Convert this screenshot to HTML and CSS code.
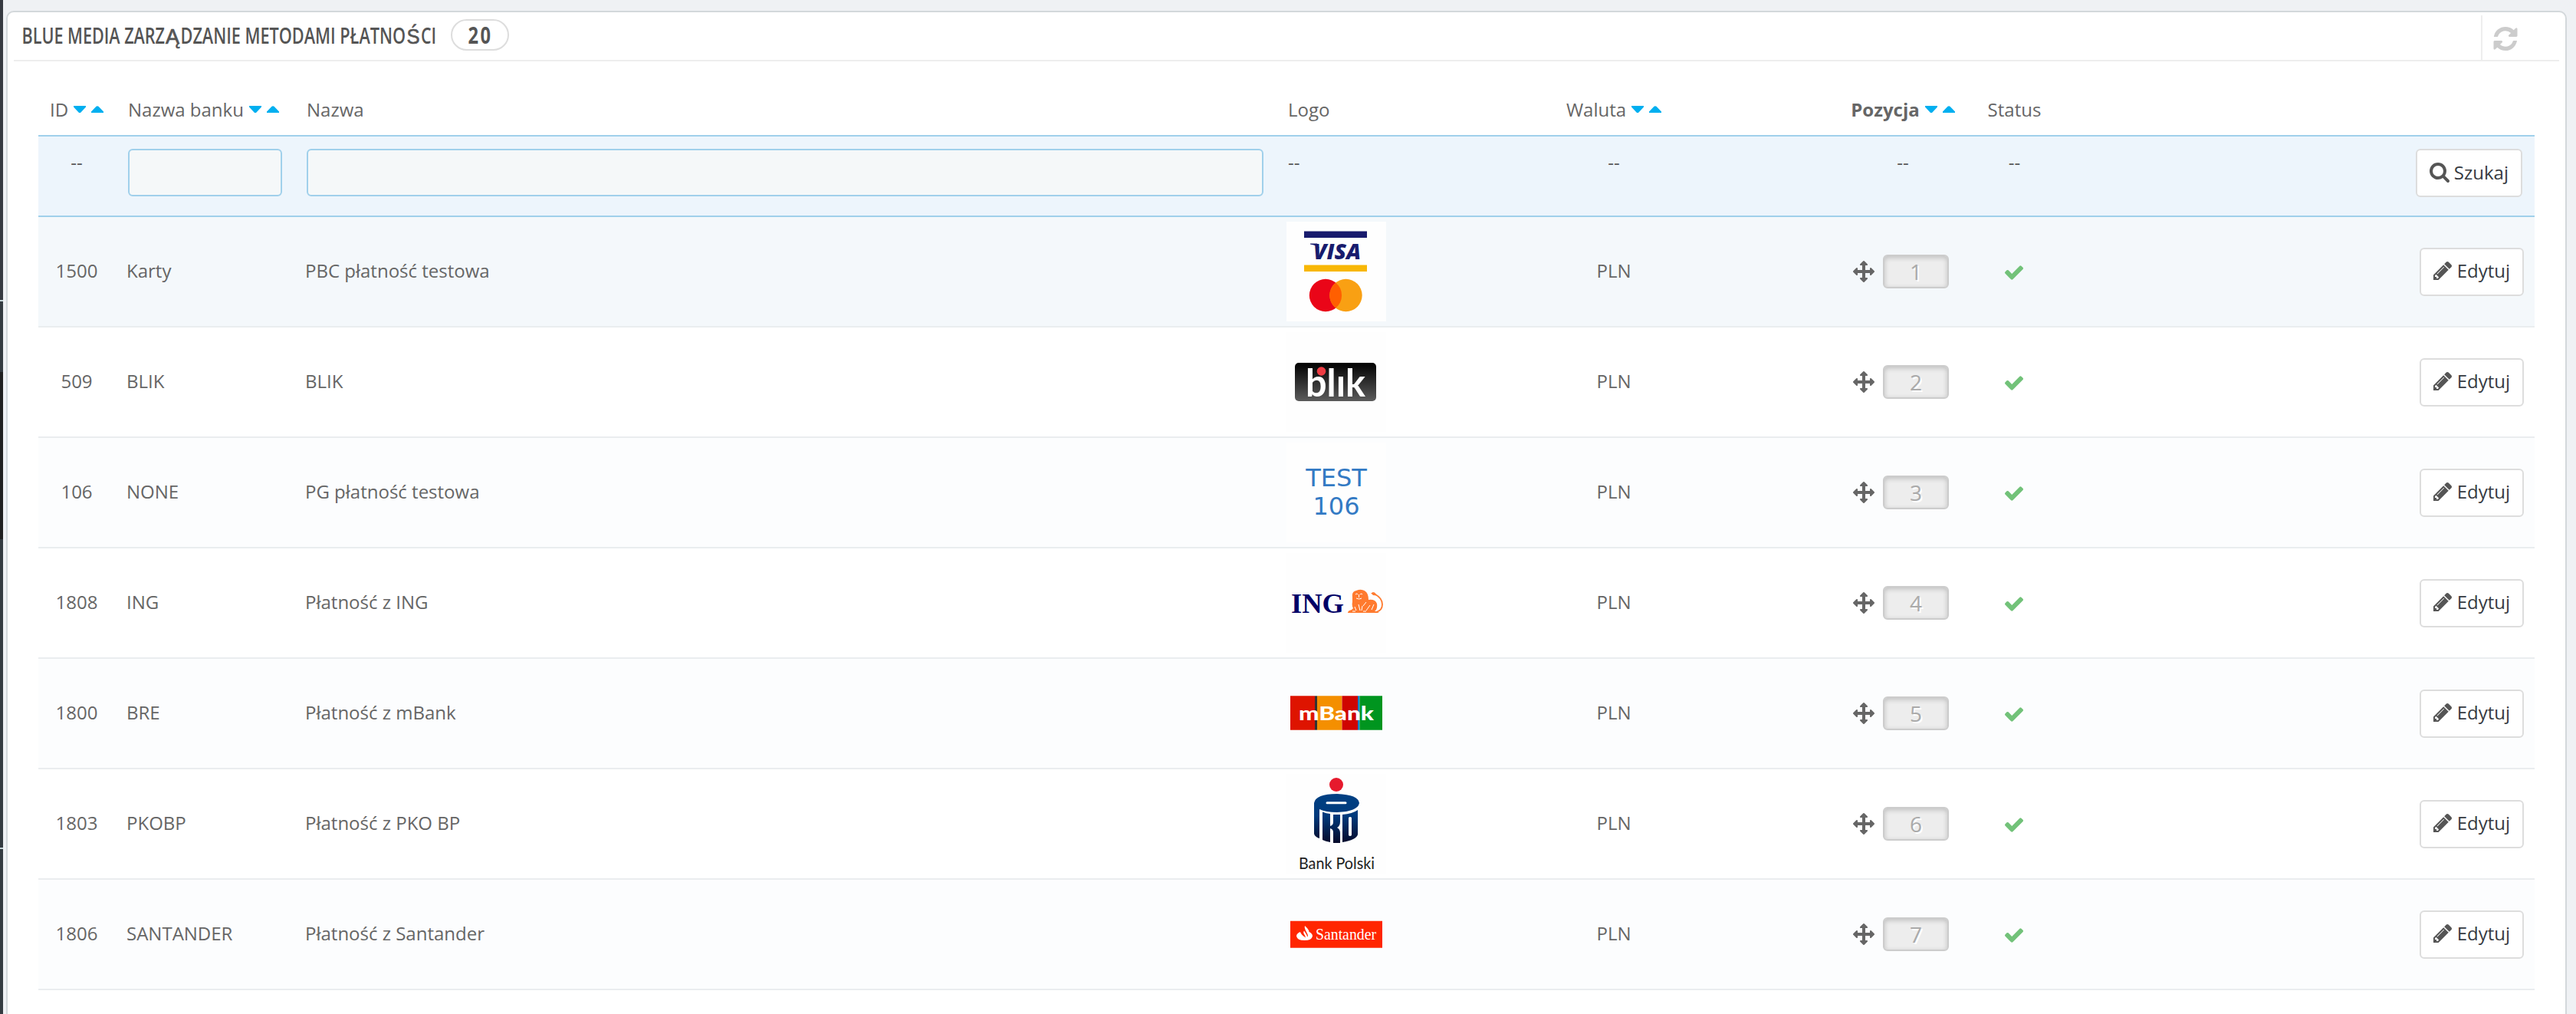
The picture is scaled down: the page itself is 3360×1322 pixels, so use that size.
FILE: index.html
```html
<!DOCTYPE html>
<html lang="pl">
<head>
<meta charset="utf-8">
<title>Blue Media – zarządzanie metodami płatności</title>
<link rel="stylesheet" href="styles.css">
</head>
<body>
<svg class="defs" aria-hidden="true">
  <symbol id="i-refresh" viewBox="128 128 1536 1536"><path d="M1639 1056q0 5-1 7-64 268-268 434.500t-478 166.500q-146 0-282.500-55t-243.500-157l-129 129q-19 19-45 19t-45-19-19-45v-448q0-26 19-45t45-19h448q26 0 45 19t19 45-19 45l-137 137q71 66 161 102t187 36q134 0 250-65t186-179q11-17 53-117 8-23 30-23h192q13 0 22.500 9.500t9.500 22.500zm25-800v448q0 26-19 45t-45 19h-448q-26 0-45-19t-19-45 19-45l138-138q-148-137-349-137-134 0-250 65t-186 179q-11 17-53 117-8 23-30 23h-199q-13 0-22.500-9.500t-9.500-22.500v-7q65-268 270-434.500t480-166.500q146 0 284 55.500t245 156.500l130-129q19-19 45-19t45 19 19 45z"/></symbol>
  <symbol id="i-search" viewBox="64 128 1664 1664"><path d="M1216 832q0-185-131.500-316.500t-316.500-131.500-316.500 131.500-131.500 316.500 131.500 316.500 316.500 131.500 316.500-131.500 131.500-316.500zm512 832q0 52-38 90t-90 38q-54 0-90-38l-343-342q-179 124-399 124-143 0-273.500-55.500t-225-150-150-225-55.500-273.500 55.500-273.500 150-225 225-150 273.500-55.500 273.500 55.500 225 150 150 225 55.500 273.500q0 220-124 399l343 343q37 37 37 90z"/></symbol>
  <symbol id="i-pencil" viewBox="128 149 1515 1515"><path d="M491 1536l91-91-235-235-91 91v107h128v128h107zm523-928q0-22-22-22-10 0-17 7l-542 542q-7 7-7 17 0 22 22 22 10 0 17-7l542-542q7-7 7-17zm-54-192l416 416-832 832h-416v-416zm683 96q0 53-37 90l-166 166-416-416 166-165q36-38 90-38 53 0 91 38l235 234q37 39 37 91z"/></symbol>
  <symbol id="i-check" viewBox="121 334 1550 1188"><path d="M1671 566q0 40-28 68l-724 724-136 136q-28 28-68 28t-68-28l-136-136-362-362q-28-28-28-68t28-68l136-136q28-28 68-28t68 28l294 295 656-657q28-28 68-28t68 28l136 136q28 28 28 68z"/></symbol>
  <symbol id="i-move" viewBox="0 0 1792 1792"><path d="M1792 896q0 26-19 45l-256 256q-19 19-45 19t-45-19-19-45v-128h-384v384h128q26 0 45 19t19 45-19 45l-256 256q-19 19-45 19t-45-19l-256-256q-19-19-19-45t19-45 45-19h128v-384h-384v128q0 26-19 45t-45 19-45-19l-256-256q-19-19-19-45t19-45l256-256q19-19 45-19t45 19 19 45v128h384v-384h-128q-26 0-45-19t-19-45 19-45l256-256q19-19 45-19t45 19l256 256q19 19 19 45t-19 45-45 19h-128v384h384v-128q0-26 19-45t45-19 45 19l256 256q19 19 19 45z"/></symbol>
  <symbol id="i-sort" viewBox="0 0 39 9"><path d="M0 0h16v1.500L9.500 8.500q-1.500 1-3 0L0 1.500zM23 9h16V7.500L32.500.8q-1.500-1-3 0L23 7.500z"/></symbol>
</svg>

<div class="page">
  <nav class="sidebar">
    <span class="side-block side-first"></span>
    <span class="side-block side-current"></span>
    <span class="side-block side-next"></span>
    <span class="side-block side-last"></span>
  </nav>
  <main class="panel">
    <header class="panel-heading">
      <svg class="panel-title" viewBox="0 0 550 54" width="550" height="54"><text y="37"><tspan x="1.500" textLength="186.500" lengthAdjust="spacingAndGlyphs">BLUE MEDIA ZARZ</tspan><tspan class="wide" x="189" textLength="18" lengthAdjust="spacingAndGlyphs">Ą</tspan><tspan x="208.500" textLength="293.500" lengthAdjust="spacingAndGlyphs">DZANIE METODAMI PŁATNO</tspan><tspan class="wide" x="503.500" textLength="17" lengthAdjust="spacingAndGlyphs">Ś</tspan><tspan x="522" textLength="20" lengthAdjust="spacingAndGlyphs">CI</tspan></text></svg>
      <span class="badge"><svg width="34" height="46" viewBox="0 0 34 46"><text class="count" y="37"><tspan x="0.500" textLength="13.500" lengthAdjust="spacingAndGlyphs">2</tspan><tspan x="16.500" textLength="13.500" lengthAdjust="spacingAndGlyphs">0</tspan></text></svg></span>
      <a class="refresh"><svg><use href="#i-refresh"/></svg></a>
    </header>

    <section class="table">
      <div class="row head">
        <div class="c-id">ID <svg class="sort"><use href="#i-sort"/></svg></div>
        <div class="c-bank">Nazwa banku <svg class="sort"><use href="#i-sort"/></svg></div>
        <div class="c-name">Nazwa</div>
        <div class="c-logo">Logo</div>
        <div class="c-cur">Waluta <svg class="sort"><use href="#i-sort"/></svg></div>
        <div class="c-pos"><b>Pozycja</b> <svg class="sort"><use href="#i-sort"/></svg></div>
        <div class="c-status">Status</div>
        <div class="c-act"></div>
      </div>
      <div class="row filter">
        <div class="c-id">--</div>
        <div class="c-bank"><input type="text" class="field"></div>
        <div class="c-name"><input type="text" class="field"></div>
        <div class="c-logo">--</div>
        <div class="c-cur">--</div>
        <div class="c-pos">--</div>
        <div class="c-status">--</div>
        <div class="c-act"><a class="btn"><svg class="i-search"><use href="#i-search"/></svg>Szukaj</a></div>
      </div>

      <div class="row item hover">
        <div class="c-id">1500</div><div class="c-bank">Karty</div><div class="c-name">PBC płatność testowa</div>
        <div class="c-logo"><svg class="logo" viewBox="0 0 130 130">
          <path fill="#181b6d" d="M23 12.500h82v8.500H23z"/><path fill="#f8b706" d="M23 56.500h82v8.500H23z"/>
          <text class="visa" x="35" y="48.800" textLength="62" lengthAdjust="spacingAndGlyphs">VISA</text>
          <path fill="#181b6d" d="M31 28.500h9l3 6q-4-4-12-5z"/>
          <circle cx="51" cy="96" r="21.200" fill="#ea0518"/><circle cx="77.500" cy="96" r="21.200" fill="#f9a013"/>
          <path fill="#ff5f00" d="M64.200 79.500a21.200 21.200 0 0 1 0 33 21.200 21.200 0 0 1 0-33z"/>
        </svg></div>
        <div class="c-cur">PLN</div><div class="c-pos"><svg class="i-move"><use href="#i-move"/></svg><span class="pos">1</span></div>
        <div class="c-status"><svg class="i-check"><use href="#i-check"/></svg></div><div class="c-act"><a class="btn"><svg class="i-pencil"><use href="#i-pencil"/></svg>Edytuj</a></div>
      </div>

      <div class="row item">
        <div class="c-id">509</div><div class="c-bank">BLIK</div><div class="c-name">BLIK</div>
        <div class="c-logo"><svg class="logo" viewBox="0 0 130 130">
          <defs><linearGradient id="blik" x2="0" y2="1"><stop stop-color="#000"/><stop offset="1" stop-color="#5c5c5c"/></linearGradient></defs>
          <rect x="11" y="40" width="106" height="50" rx="5" fill="url(#blik)"/>
          <text class="blik" x="25" y="83.500" textLength="78" lengthAdjust="spacingAndGlyphs">blık</text>
          <circle cx="45.500" cy="51" r="5.800" fill="#ee3c43"/>
        </svg></div>
        <div class="c-cur">PLN</div><div class="c-pos"><svg class="i-move"><use href="#i-move"/></svg><span class="pos">2</span></div>
        <div class="c-status"><svg class="i-check"><use href="#i-check"/></svg></div><div class="c-act"><a class="btn"><svg class="i-pencil"><use href="#i-pencil"/></svg>Edytuj</a></div>
      </div>

      <div class="row item odd">
        <div class="c-id">106</div><div class="c-bank">NONE</div><div class="c-name">PG płatność testowa</div>
        <div class="c-logo"><svg class="logo" viewBox="0 0 130 130"><text class="test" x="65" y="57">TEST</text><text class="test" x="65" y="94">106</text></svg></div>
        <div class="c-cur">PLN</div><div class="c-pos"><svg class="i-move"><use href="#i-move"/></svg><span class="pos">3</span></div>
        <div class="c-status"><svg class="i-check"><use href="#i-check"/></svg></div><div class="c-act"><a class="btn"><svg class="i-pencil"><use href="#i-pencil"/></svg>Edytuj</a></div>
      </div>

      <div class="row item">
        <div class="c-id">1808</div><div class="c-bank">ING</div><div class="c-name">Płatność z ING</div>
        <div class="c-logo"><svg class="logo" viewBox="0 0 130 130">
          <text class="ing" x="6" y="78" textLength="69" lengthAdjust="spacingAndGlyphs">ING</text>
          <path fill="#ff7a2e" d="M86 57q-1-7 5-8 7-3 12 1 4 3 4 11 9-1 11 5 1 7-3 10l6 1-2 1H80q0-3 5-4l2-2q-2-3-1-8z"/>
          <path d="M112 52q2 0 4 2 9 5 9 13 0 8-8 10h-5" fill="none" stroke="#ff7a2e" stroke-width="1.800"/>
          <path d="M110 52l5-.5 3 4-5-.5z" fill="#ff7a2e"/>
          <path d="M90 54q2-2 3 0M96 54q2-2 3 0M91 59q4 2 7 0M94.500 54v4M89 70l2 5M94 67l2 8M99 69l-1 6M104 64l-4 5M109 68l-5 7M114 67l-3 7M86 76h4M100 76h4" fill="none" stroke="#fff" stroke-width="1"/>
        </svg></div>
        <div class="c-cur">PLN</div><div class="c-pos"><svg class="i-move"><use href="#i-move"/></svg><span class="pos">4</span></div>
        <div class="c-status"><svg class="i-check"><use href="#i-check"/></svg></div><div class="c-act"><a class="btn"><svg class="i-pencil"><use href="#i-pencil"/></svg>Edytuj</a></div>
      </div>

      <div class="row item odd">
        <div class="c-id">1800</div><div class="c-bank">BRE</div><div class="c-name">Płatność z mBank</div>
        <div class="c-logo"><svg class="logo clear" viewBox="0 0 130 130">
          <path fill="#de1400" d="M5 42.300h32v44.400H5z"/><path fill="#333" d="M37 42.300h3v44.400h-3z"/><path fill="#f48f00" d="M40 42.300h32.500v44.400H40z"/><path fill="#cf0500" d="M72.500 42.300H93v44.400H72.500z"/><path fill="#0081cb" d="M93 42.300h2.500v44.400H93z"/><path fill="#00951f" d="M95.500 42.300H125v44.400H95.500z"/>
          <text class="mbank" x="16" y="74" textLength="98" lengthAdjust="spacingAndGlyphs">mBank</text>
        </svg></div>
        <div class="c-cur">PLN</div><div class="c-pos"><svg class="i-move"><use href="#i-move"/></svg><span class="pos">5</span></div>
        <div class="c-status"><svg class="i-check"><use href="#i-check"/></svg></div><div class="c-act"><a class="btn"><svg class="i-pencil"><use href="#i-pencil"/></svg>Edytuj</a></div>
      </div>

      <div class="row item">
        <div class="c-id">1803</div><div class="c-bank">PKOBP</div><div class="c-name">Płatność z PKO BP</div>
        <div class="c-logo"><svg class="logo" viewBox="0 0 130 130">
          <defs><linearGradient id="pko" gradientUnits="userSpaceOnUse" x1="0" y1="26" x2="0" y2="90"><stop stop-color="#004083"/><stop offset=".45" stop-color="#003a7c"/><stop offset="1" stop-color="#050a2a"/></linearGradient></defs>
          <circle cx="65" cy="14" r="9" fill="#e61a2d"/>
          <g fill="url(#pko)">
            <path d="M36 38q2-12 30-12 28 1 29 12-2 11-29 12-15 0-23-4v38q-6-2-7-6z"/>
            <path d="M47 49.500q5 2 10 2.500v16q4-1 4-5V53h9v9q0 6-4 8 4 2 4 7v13h-9V76q0-4-4-5v18q-6-1-10-3z"/>
            <path fill-rule="evenodd" d="M73 53q13-1 20-6v32q-2 7-20 10zM81 57v23q2 2 4 0V57q-2-2-4 0z"/>
          </g>
          <path d="M53 37.800h24" stroke="#fff" stroke-width="3" stroke-linecap="round"/>
          <text class="pko" x="16" y="123.500" textLength="99" lengthAdjust="spacingAndGlyphs">Bank Polski</text>
        </svg></div>
        <div class="c-cur">PLN</div><div class="c-pos"><svg class="i-move"><use href="#i-move"/></svg><span class="pos">6</span></div>
        <div class="c-status"><svg class="i-check"><use href="#i-check"/></svg></div><div class="c-act"><a class="btn"><svg class="i-pencil"><use href="#i-pencil"/></svg>Edytuj</a></div>
      </div>

      <div class="row item odd">
        <div class="c-id">1806</div><div class="c-bank">SANTANDER</div><div class="c-name">Płatność z Santander</div>
        <div class="c-logo"><svg class="logo clear" viewBox="0 0 130 130">
          <path fill="#ff2600" d="M5 47.700h120v35H5z"/>
          <path fill="#fff" d="M18 62q-5 2-5 5.500 1 5.500 10.500 5.500t10.500-5.500q0-3.500-4.500-5.500 0-2-2.500-5l-3-3q-1 2 .5 5l3 6q1 2 0 3.500-1-3-4.500-8-2 2 1 6l1 3q-6-4-7-7.500z"/>
          <text class="santander" x="38" y="71.700" textLength="79" lengthAdjust="spacingAndGlyphs">Santander</text>
        </svg></div>
        <div class="c-cur">PLN</div><div class="c-pos"><svg class="i-move"><use href="#i-move"/></svg><span class="pos">7</span></div>
        <div class="c-status"><svg class="i-check"><use href="#i-check"/></svg></div><div class="c-act"><a class="btn"><svg class="i-pencil"><use href="#i-pencil"/></svg>Edytuj</a></div>
      </div>
    </section>
  </main>
</div>
</body>
</html>
```
FILE: styles.css
```css
* { box-sizing: border-box; }
body {
  margin: 0;
  background: #eff1f4;
  color: #666;
  font: 24px/32px "Open Sans", "Noto Sans", sans-serif;
}
svg { display: block; fill: currentColor; flex: none; }
.defs { width: 0; height: 0; position: absolute; }
.page { display: flex; height: 1322px; overflow: hidden; }

.sidebar { width: 4px; margin-right: 4px; display: flex; flex-direction: column; background: #363a41; }
.side-block { flex: none; border-top: 0 solid #c3d3d6; }
.side-first { height: 391px; }
.side-current { height: 312px; border-top-width: 2px; background: linear-gradient(#343b41 92px, #202020 92px); }
.side-next { height: 402px; background: #343b41; }
.side-last { height: 217px; border-top-width: 2px; background: #343b41; }

.panel {
  width: 3340px;
  height: 1400px;
  margin-top: 14px;
  flex: none;
  border: 2px solid #d3d8db;
  border-radius: 10px;
  background: #fff;
}
.panel-heading {
  height: 64px;
  margin: 0 8px;
  display: flex;
  border-bottom: 2px solid #eee;
  color: #555;
}
.panel-title { margin: 4px 0 0 9px; font: 600 28px "Open Sans", sans-serif; }
.panel-title .wide { font: 500 28px "Liberation Sans", sans-serif; stroke: #555; stroke-width: .7px; }
.badge {
  width: 76px;
  height: 41px;
  margin: 9px 0 0 11px;
  padding: 0 0 0 20px;
  border: 2px solid #ddd;
  border-radius: 21px;
}
.badge svg { margin-top: -7px; }
.count { font: bold 30px "Open Sans", sans-serif; }
.refresh {
  width: 102px;
  height: 58px;
  margin: 4px 0 0 auto;
  padding: 15px 0 0 14px;
  border-left: 2px solid #eee;
  color: #ccc;
}
.refresh svg { width: 32px; height: 31px; }

.table { margin: 30px 40px 0; }
.row { display: grid; grid-template-columns: 100px 234px 1280px 364px 154px 380px 131px 613px; }
.row > div { display: flex; align-items: center; }
.row .c-id, .row .c-cur, .row .c-status { justify-content: center; }
.c-bank { padding-left: 15px; }
.c-name { padding-left: 14px; }
.c-logo { padding-left: 14px; }
.row .c-pos { padding-left: 220px; justify-content: center; }
.row .c-act { padding-right: 14px; justify-content: flex-end; }

.head { height: 66px; }
.head > div { padding-bottom: 1px; }
.head .c-bank, .filter .c-bank { padding-left: 17px; }
.head .c-name, .filter .c-name { padding-left: 16px; }
.head .c-logo, .filter .c-logo { padding-left: 16px; }
.sort { width: 39px; height: 9px; margin-left: 7px; color: #00aff0; }

.filter { height: 107px; border: solid #a0d0eb; border-width: 2px 0; background: #edf5fc; }
.filter > div { height: 96px; align-items: flex-start !important; padding-top: 16px; line-height: 36px; color: #555; }
.filter .c-bank, .filter .c-name, .filter .c-act { padding-right: 16px; }
.field {
  width: 100%;
  height: 62px;
  border: 2px solid #a0d0eb;
  border-radius: 6px;
  background: #f5f8f9;
}

.item { height: 144px; border-bottom: 2px solid #eaedef; }
.item.odd { background: #fcfdfe; }
.item.hover { background: #f4f8fb; }
.item > .c-id, .item > .c-bank, .item > .c-name, .item > .c-cur { padding-bottom: 3px; }
.logo { width: 130px; height: 130px; background: #fefefe; }
.logo.clear { background: none; }

.btn {
  height: 63px;
  border: 2px solid #ddd;
  border-radius: 6px;
  background: #fff;
  color: #363a41;
  display: flex;
  align-items: center;
  padding: 0 16px 2px;
}
.btn svg { color: #555; }
.i-search { width: 26px; height: 26px; margin-right: 6px; }
.i-pencil { width: 24px; height: 24px; margin-right: 7px; }
.i-move { width: 28px; height: 28px; margin-right: 11px; }
.i-check { width: 24px; height: 19px; margin: 3px 1px 0 0; color: #72c279; }
.item .c-pos { padding-right: 5px; }
.pos {
  width: 86px;
  height: 44px;
  border: 2px solid #ccc;
  border-radius: 6px;
  background: #ededed;
  box-shadow: inset 0 2px 6px rgba(0, 0, 0, .2);
  color: #aaa;
  font-size: 28px;
  line-height: 40px;
  text-align: center;
  text-shadow: 2px 2px 0 #fff;
}

.visa { font: italic 800 28px "Open Sans", sans-serif; fill: #181b6d; }
.blik { font: bold 50px Lato, sans-serif; fill: #fff; }
.test { font: 32px "DejaVu Sans", sans-serif; fill: #337ac4; text-anchor: middle; }
.ing { font: bold 35px "Liberation Serif", serif; fill: #006; }
.mbank { font: 900 25px Lato, sans-serif; fill: #fff; }
.pko { font: 21px Lato, sans-serif; fill: #222; }
.santander { font: 21px "Liberation Serif", serif; fill: #fff; }
```
